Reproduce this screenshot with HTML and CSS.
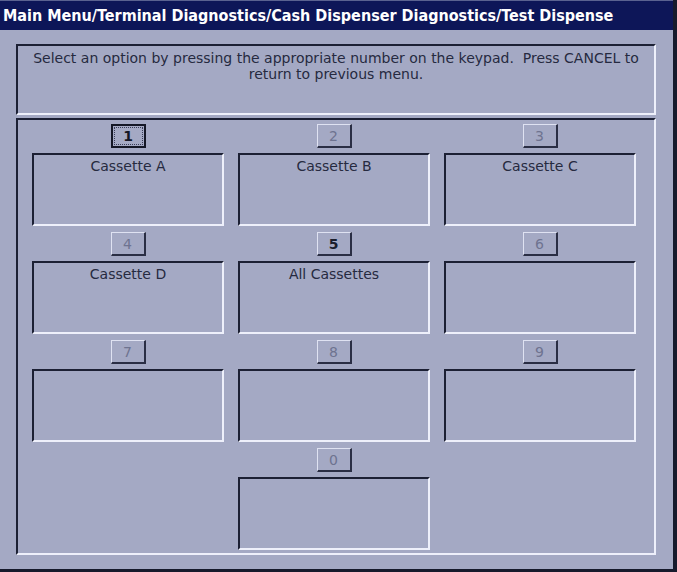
FILE: index.html
```html
<!DOCTYPE html>
<html>
<head>
<meta charset="utf-8">
<link rel="stylesheet" href="styles.css">
</head>
<body>
<div class="screen">
  <div class="title">Main Menu/Terminal Diagnostics/Cash Dispenser Diagnostics/Test Dispense</div>
  <div class="content">
    <div class="prompt sunken">Select an option by pressing the appropriate number on the keypad.&nbsp; Press CANCEL to<br>return to previous menu.</div>
    <div class="panel sunken">
      <div class="grid">
        <div class="cell"><div class="key focus"><span class="dots">1</span></div><div class="opt sunken">Cassette A</div></div>
        <div class="cell"><div class="key off">2</div><div class="opt sunken">Cassette B</div></div>
        <div class="cell"><div class="key off">3</div><div class="opt sunken">Cassette C</div></div>
        <div class="cell"><div class="key off">4</div><div class="opt sunken">Cassette D</div></div>
        <div class="cell"><div class="key on">5</div><div class="opt sunken">All Cassettes</div></div>
        <div class="cell"><div class="key off">6</div><div class="opt sunken"></div></div>
        <div class="cell"><div class="key off">7</div><div class="opt sunken"></div></div>
        <div class="cell"><div class="key off">8</div><div class="opt sunken"></div></div>
        <div class="cell"><div class="key off">9</div><div class="opt sunken"></div></div>
        <div class="cell"></div>
        <div class="cell"><div class="key off">0</div><div class="opt sunken"></div></div>
        <div class="cell"></div>
      </div>
    </div>
  </div>
</div>
</body>
</html>
```

FILE: styles.css
```css
html, body {
  margin: 0;
  padding: 0;
  background: #161a2c;
}
body {
  width: 677px;
  height: 572px;
  overflow: hidden;
}
.screen {
  width: 673px;
  height: 569px;
  background: #a4a9c4;
  font-family: "DejaVu Sans", Verdana, sans-serif;
  color: #262a40;
}
.title {
  height: 30px;
  box-sizing: border-box;
  background: #0d1658;
  border-top: 1px solid #5a6290;
  color: #ffffff;
  font-family: "DejaVu Sans Condensed", "DejaVu Sans", sans-serif;
  font-weight: bold;
  font-size: 16px;
  line-height: 29px;
  padding-left: 3px;
  white-space: nowrap;
}
.content {
  padding: 14px 17px 0 16px;
}
.sunken {
  box-sizing: border-box;
  border-top: 2px solid #1c2034;
  border-left: 2px solid #1c2034;
  border-bottom: 2px solid #eef0fb;
  border-right: 2px solid #eef0fb;
}
.prompt {
  height: 71px;
  text-align: center;
  font-size: 14px;
  line-height: 16px;
  padding: 4px 4px 0 4px;
  white-space: nowrap;
}
.panel {
  margin-top: 3px;
  height: 437px;
}
.grid {
  display: grid;
  grid-template-columns: repeat(3, 192px);
  column-gap: 14px;
  row-gap: 6px;
  padding: 4px 0 0 14px;
}
.cell {
  display: flex;
  flex-direction: column;
  align-items: center;
}
.key {
  box-sizing: border-box;
  width: 35px;
  height: 24px;
  border-top: 1px solid #dfe2f2;
  border-left: 1px solid #dfe2f2;
  border-bottom: 2px solid #2a2e44;
  border-right: 2px solid #2a2e44;
  display: flex;
  align-items: center;
  justify-content: center;
  font-size: 14px;
  margin-bottom: 5px;
}
.key.off {
  color: #6e7390;
}
.key.on {
  color: #1a1d2c;
  font-weight: bold;
}
.key.focus {
  border: 2px solid #141726;
  color: #141726;
  font-weight: bold;
  padding: 1px;
}
.dots {
  box-sizing: border-box;
  width: 100%;
  height: 100%;
  border: 1px dotted #3a3e58;
  display: flex;
  align-items: center;
  justify-content: center;
}
.opt {
  width: 192px;
  height: 73px;
  text-align: center;
  font-size: 14px;
  line-height: 16px;
  padding-top: 3px;
}
```
